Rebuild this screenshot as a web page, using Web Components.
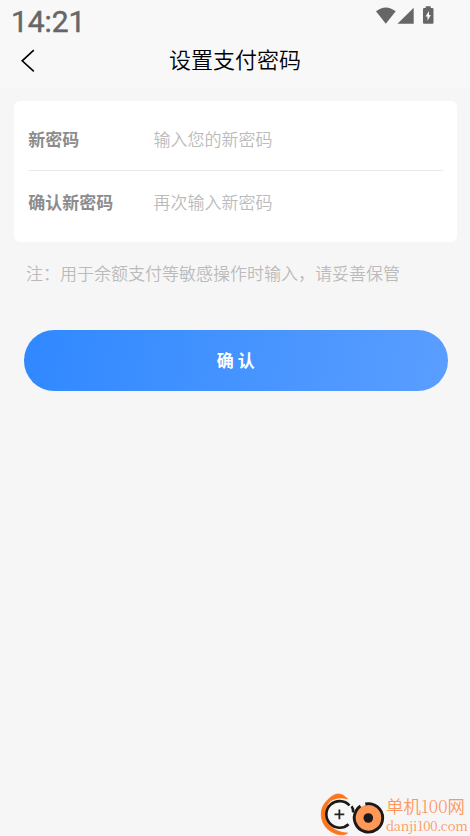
<!DOCTYPE html>
<html lang="zh-CN">
<head>
<meta charset="utf-8">
<title>设置支付密码</title>
<style>
html,body{margin:0;height:100%}
body{background:#f6f6f6;font-family:"Noto Sans CJK SC",sans-serif;overflow:hidden}
</style>
</head>
<body>
<pay-page></pay-page>
<script>
const define = (name, html) => customElements.define(name, class extends HTMLElement {
  constructor() {
    super();
    const t = document.createElement('template');
    t.innerHTML = html;
    this.attachShadow({ mode: 'open' }).append(t.content.cloneNode(true));
  }
});

define('status-bar', `
<style>
:host{display:flex;justify-content:space-between;align-items:flex-start;height:40px;padding:0 36px 0 11px;box-sizing:border-box;color:#666;font-family:Roboto,sans-serif}
time{font-size:30px;line-height:35px;font-weight:400;-webkit-text-stroke:.45px #666;padding-top:4px;letter-spacing:-.1px}
svg{display:block;margin-top:6px}
</style>
<time>14:21</time>
<svg width="59" height="19" viewBox="375 6 59 19" fill="#666">
<path d="M376 11.2Q385.8 3.6 395.7 11.2L385.8 23.8Z"/>
<path d="M397.5 23.8L413.7 7.8V23.8Z"/>
<path fill-rule="evenodd" d="M425.7 6.3h5v1.6h1.7a1.1 1.1 0 0 1 1.1 1.1v13.7a1.1 1.1 0 0 1-1.1 1.1h-8.3a1.1 1.1 0 0 1-1.1-1.1V9a1.1 1.1 0 0 1 1.1-1.1h1.6zM429 11l-3.5 5.5h2v4.3l3.3-5.8H429z"/>
</svg>`);

define('nav-bar', `
<style>
:host{display:grid;grid-template-columns:48px 1fr 48px;align-items:start;height:48px}
svg{display:block;margin:9px 0 0 20px}
h1{margin:2px 0 0;font-size:22px;line-height:32px;font-weight:350;color:#000;text-align:center}
</style>
<svg width="16" height="24" viewBox="20 49 16 24" fill="none" stroke="#000" stroke-width="1.6"><path d="M33.8 50.2L22.2 60.8L33.8 71.4"/></svg>
<h1><slot></slot></h1><span></span>`);

define('form-row', `
<style>
:host{display:grid;grid-template-columns:125.3px 1fr;align-items:center;font-size:17px;line-height:25px}
.l{font-weight:700;color:#8c8c8c}
.p{color:#bbb;font-weight:350}
</style>
<span class="l"><slot name="label"></slot></span><span class="p"><slot></slot></span>`);

define('form-card', `
<style>
:host{display:block;background:#fff;border-radius:6px;margin:12.5px 13px 0 14.3px;height:141.3px;box-sizing:border-box;padding:7px 14px 0}
::slotted(form-row){height:62px}
::slotted(form-row:first-child){border-bottom:1px solid #ebebeb}
</style>
<slot></slot>`);

define('form-note', `
<style>:host{display:block;margin:18.2px 0 0 26px;font-size:17px;line-height:25px;color:#bbb;font-weight:350;white-space:nowrap}</style>
<slot></slot>`);

define('submit-button', `
<style>
:host{display:block;margin:45.5px 22px 0 23.5px}
button{display:block;width:100%;height:60.5px;border:0;padding:0 0 2px;border-radius:30.3px;background:linear-gradient(100deg,#3088ff,#5a9eff);color:#fff;font:700 17px/25px "Noto Sans CJK SC",sans-serif}
</style>
<button><slot></slot></button>`);

define('site-mark', `
<style>
:host{display:flex;gap:1px;color:#ff965d;width:150px}
svg{display:block;flex:none}
.t{display:flex;flex-direction:column;padding-top:3px}
b{font-weight:350;font-size:17.4px;line-height:22px;height:22px;white-space:nowrap}
i{font-style:normal;font-family:"Noto Serif CJK SC","Liberation Serif",serif;font-size:17px;line-height:20px}
small{font:13px/18px "Noto Serif CJK SC","Noto Sans CJK SC",serif;letter-spacing:-.2px;white-space:nowrap}
</style>
<svg width="65" height="44" viewBox="320 792 65 44" fill="none">
<path d="M347.5 799C345 796 342 794 338 794C333 794.5 328 799 325 803C319.5 810 320 821 327 828.5C332 833 342 837.5 347.5 833C340 833 331 829 327 822C324 814 325 806 331 800.5C336 797.5 342 797.2 347.5 799Z" fill="#ff751a" stroke="#ff751a" stroke-width=".8"/>
<circle cx="339.3" cy="814.6" r="14.2" fill="#f8f8f8"/>
<path d="M349.5 805.5A13.3 13.3 0 1 0 348.6 824.2M351.6 806.3Q353.6 809 353.2 812.5" stroke="#1d191b" stroke-width="2.6"/>
<path d="M334.5 814.4h9.8M339.4 809.5v9.8" stroke="#222" stroke-width="1.8"/>
<circle cx="368.3" cy="818" r="13.3" fill="#ff9856"/>
<path d="M365.3 804A14.2 14.2 0 1 1 356.2 810.7Q358 807.4 360.5 806" stroke="#1d191b" stroke-width="2.9"/>
<circle cx="368.3" cy="818" r="4.8" fill="#1d191b"/>
</svg>
<div class="t"><b>单机<i>100</i>网</b><small>danji100.com</small></div>`);

define('pay-page', `
<style>
:host{display:flex;flex-direction:column;height:836px;overflow:hidden}
header{background:#f8f8f8;height:88px}
footer{margin-top:auto;display:flex;justify-content:flex-end}
</style>
<header><status-bar></status-bar><nav-bar>设置支付密码</nav-bar></header>
<form-card>
<form-row><span slot="label">新密码</span>输入您的新密码</form-row>
<form-row><span slot="label">确认新密码</span>再次输入新密码</form-row>
</form-card>
<form-note>注：用于余额支付等敏感操作时输入，请妥善保管</form-note>
<submit-button>确 认</submit-button>
<footer><site-mark></site-mark></footer>`);
</script>
</body>
</html>
